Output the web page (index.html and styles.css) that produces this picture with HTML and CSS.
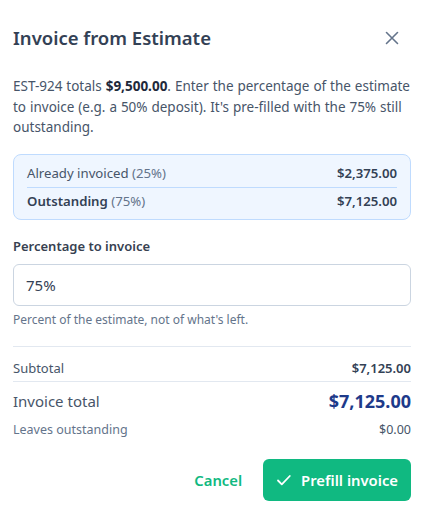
FILE: index.html
```html
<!DOCTYPE html>
<html lang="en">
<head>
    <meta charset="UTF-8">
    <meta name="viewport" content="width=device-width, initial-scale=1.0">
    <title>Invoice from Estimate</title>
    <link rel="stylesheet" href="styles.css">
</head>
<body>
    <div class="modal">
        <div class="modal-header">
            <h2>Invoice from Estimate</h2>
            <button class="close-btn" aria-label="Close">
                <svg width="16" height="16" viewBox="0 0 16 16" fill="none" stroke="currentColor" stroke-width="1.6" stroke-linecap="round">
                    <path d="M2.5 2.5l11 11M13.5 2.5l-11 11"/>
                </svg>
            </button>
        </div>

        <p class="intro">EST-924 totals <strong>$9,500.00</strong>. Enter the percentage of the estimate to invoice (e.g. a 50% deposit). It's pre-filled with the 75% still outstanding.</p>

        <div class="summary-box">
            <div class="summary-row">
                <span>Already invoiced <span class="muted">(25%)</span></span>
                <span class="amount">$2,375.00</span>
            </div>
            <div class="summary-row">
                <span><strong>Outstanding</strong> <span class="muted">(75%)</span></span>
                <span class="amount">$7,125.00</span>
            </div>
        </div>

        <div class="field">
            <label for="percent">Percentage to invoice</label>
            <input type="text" id="percent" value="75%">
            <div class="hint">Percent of the estimate, not of what's left.</div>
        </div>

        <div class="totals">
            <div class="totals-row subtotal">
                <span>Subtotal</span>
                <span class="amount">$7,125.00</span>
            </div>
            <div class="totals-row grand">
                <span>Invoice total</span>
                <span class="grand-amount">$7,125.00</span>
            </div>
            <div class="totals-row leaves">
                <span>Leaves outstanding</span>
                <span>$0.00</span>
            </div>
        </div>

        <div class="actions">
            <button class="btn-cancel">Cancel</button>
            <button class="btn-primary">
                <svg width="16" height="16" viewBox="0 0 16 16" fill="none" stroke="currentColor" stroke-width="1.8" stroke-linecap="round" stroke-linejoin="round">
                    <path d="M2 8.5l3.8 3.8 8-8.3"/>
                </svg>
                Prefill invoice
            </button>
        </div>
    </div>
</body>
</html>
```

FILE: styles.css
```css
body {
    margin: 0;
    background: #ffffff;
    font-family: "Noto Sans", "Open Sans", sans-serif;
    color: #475569;
}
.modal {
    padding: 24px 16px 15px 13px;
}
.modal-header {
    display: flex;
    align-items: center;
    justify-content: space-between;
}
.modal-header h2 {
    margin: 0;
    font-size: 18.5px;
    font-weight: 600;
    color: #334155;
    line-height: 28px;
}
.close-btn {
    border: none;
    background: none;
    padding: 0;
    margin-right: 11px;
    color: #64748b;
    display: flex;
    cursor: pointer;
}
.intro {
    margin: 24px 0 0;
    font-size: 13.5px;
    line-height: 20.5px;
    word-spacing: 0.4px;
    color: #475569;
}
.intro strong {
    color: #1e293b;
}
.summary-box {
    margin-top: 16px;
    background: #eff6ff;
    border: 1px solid #bfdbfe;
    border-radius: 8px;
    padding: 5px 13px 4px;
}
.summary-row {
    display: flex;
    justify-content: space-between;
    align-items: center;
    font-size: 13.2px;
    line-height: 19px;
    padding: 4px 0;
    color: #475569;
}
.summary-row + .summary-row {
    border-top: 1px solid #bfdbfe;
}
.summary-row strong {
    color: #334155;
    font-weight: 600;
}
.muted {
    color: #64748b;
}
.amount {
    font-weight: 600;
    color: #334155;
}
.field {
    margin-top: 17px;
}
.field label {
    display: block;
    font-size: 13px;
    font-weight: 600;
    color: #374151;
    line-height: 18px;
}
.field input {
    display: block;
    box-sizing: border-box;
    width: 100%;
    height: 42px;
    margin-top: 9px;
    padding: 0 12px;
    border: 1px solid #cbd5e1;
    border-radius: 6px;
    font-family: inherit;
    font-size: 15px;
    color: #334155;
}
.hint {
    margin-top: 6px;
    font-size: 12px;
    line-height: 16px;
    color: #64748b;
}
.totals {
    margin-top: 18px;
    border-top: 1px solid #e2e8f0;
}
.totals-row {
    display: flex;
    justify-content: space-between;
    align-items: center;
}
.subtotal {
    font-size: 13px;
    line-height: 18px;
    padding: 12px 0 4px;
    border-bottom: 1px solid #e2e8f0;
}
.grand {
    font-size: 15px;
    line-height: 24px;
    padding-top: 7px;
    color: #475569;
}
.grand-amount {
    font-size: 18px;
    font-weight: 700;
    color: #1e3a8a;
}
.leaves {
    font-size: 12.5px;
    line-height: 18px;
    padding-top: 8px;
    color: #64748b;
}
.leaves span:last-child {
    color: #475569;
}
.actions {
    margin-top: 20px;
    display: flex;
    justify-content: flex-end;
    align-items: center;
    gap: 21px;
}
.btn-cancel {
    border: none;
    background: none;
    padding: 0;
    font-family: inherit;
    font-size: 14.8px;
    font-weight: 600;
    color: #10b981;
    cursor: pointer;
}
.btn-primary {
    display: flex;
    align-items: center;
    gap: 9px;
    height: 42px;
    padding: 0 13px 0 13px;
    border: none;
    border-radius: 6px;
    background: #10b981;
    color: #ffffff;
    font-family: inherit;
    font-size: 14.8px;
    font-weight: 600;
    cursor: pointer;
}
```
